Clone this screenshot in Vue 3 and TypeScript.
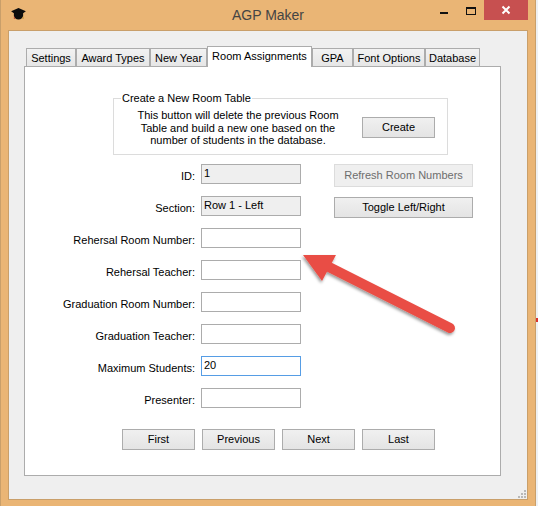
<script setup lang="ts">
interface Field {
  label: string
  value: string
  readonly?: boolean
  focused?: boolean
}

const tabs = ['Settings', 'Award Types', 'New Year', 'Room Assignments', 'GPA', 'Font Options', 'Database']
const tabWidths = [50, 74, 57, 105, 41, 72, 55]
const activeTab = 'Room Assignments'

const fields: Field[] = [
  { label: 'ID:', value: '1', readonly: true },
  { label: 'Section:', value: 'Row 1 - Left', readonly: true },
  { label: 'Rehersal Room Number:', value: '' },
  { label: 'Rehersal Teacher:', value: '' },
  { label: 'Graduation Room Number:', value: '' },
  { label: 'Graduation Teacher:', value: '' },
  { label: 'Maximum Students:', value: '20', focused: true },
  { label: 'Presenter:', value: '' },
]

const navButtons = ['First', 'Previous', 'Next', 'Last']
</script>

<template>
  <div class="page">
    <div class="window">
      <header class="titlebar">
        <svg class="app-icon" viewBox="0 0 16 13" width="15" height="12">
          <path d="M8 0 16 3.6 13 5.6V9C12 11 11 12.5 8 12.5S4 11 3 9V5.6L0 3.6z" fill="#0c0c0c" />
          <path d="M3 9.4h1v2.4H3z" fill="#b3402c" />
          <path d="M12.4 9.6h1v2.2h-1z" fill="#b98a2c" />
        </svg>
        <span class="title">AGP Maker</span>
        <div class="controls">
          <span class="ctl-min"></span>
          <span class="ctl-max"></span>
          <span class="ctl-close">
            <svg viewBox="0 0 10 10" width="10" height="10">
              <path d="M1.5 1.5 8.5 8.5M8.5 1.5 1.5 8.5" stroke="#fff" stroke-width="2" />
            </svg>
          </span>
        </div>
      </header>

      <div class="client">
        <div class="tabstrip">
          <div
            v-for="(tab, i) in tabs"
            :key="tab"
            class="tab"
            :class="{ active: tab === activeTab }"
            :style="{ width: tabWidths[i] + 'px' }"
          >{{ tab }}</div>
        </div>

        <section class="panel">
          <fieldset class="group">
            <legend>Create a New Room Table</legend>
            <p class="group-text">
              This button will delete the previous Room<br />
              Table and build a new one based on the<br />
              number of students in the database.
            </p>
            <button class="btn create">Create</button>
          </fieldset>

          <div class="form-row">
            <div class="fields">
              <template v-for="f in fields" :key="f.label">
                <label class="field-label">{{ f.label }}</label>
                <input
                  class="field-input"
                  :class="{ ro: f.readonly, focused: f.focused }"
                  :value="f.value"
                  :readonly="f.readonly"
                />
              </template>
            </div>
            <div class="actions">
              <button class="btn refresh" disabled>Refresh Room Numbers</button>
              <button class="btn toggle">Toggle Left/Right</button>
            </div>
          </div>

          <div class="nav">
            <button v-for="b in navButtons" :key="b" class="btn nav-btn">{{ b }}</button>
          </div>
        </section>

        <div class="grip">
          <i v-for="n in 6" :key="n" :class="'g' + n"></i>
        </div>
      </div>
    </div>

    <!-- sliver of another red arrow behind the window -->
    <span class="edge-tick"></span>

    <svg class="arrow" viewBox="0 0 538 506" width="538" height="506">
      <defs>
        <filter id="arrow-shadow" x="-20%" y="-20%" width="140%" height="140%">
          <feDropShadow dx="-1" dy="2" stdDeviation="1.6" flood-color="#000" flood-opacity="0.4" />
        </filter>
      </defs>
      <g filter="url(#arrow-shadow)">
        <path d="M303 255 336 255 322 281z" fill="#e94e45" />
        <path d="M327 266 450 328" stroke="#e94e45" stroke-width="10" stroke-linecap="round" />
      </g>
    </svg>
  </div>
</template>

<style scoped>
.page {
  position: relative;
  width: 538px;
  height: 506px;
  overflow: hidden;
  background: #eef0f2;
  font-family: "Liberation Sans", Arial, sans-serif;
  font-size: 11px;
  color: #000;
}

.window {
  box-sizing: border-box;
  width: 536px;
  height: 506px;
  display: flex;
  flex-direction: column;
  background: #eab575;
  border-left: 1px solid #c99f6a;
  border-right: 1px solid #c99f6a;
}

.titlebar {
  position: relative;
  height: 30px;
  flex: none;
}

.app-icon {
  position: absolute;
  left: 10px;
  top: 8px;
}

.title {
  display: block;
  text-align: center;
  font-size: 14px;
  line-height: 30px;
  color: #444;
}

.controls {
  position: absolute;
  top: 0;
  right: 7px;
  display: flex;
  align-items: flex-start;
}

.ctl-min {
  width: 8px;
  height: 2px;
  margin: 12px 18px 0 0;
  background: #111;
}

.ctl-max {
  box-sizing: border-box;
  width: 10px;
  height: 8px;
  margin: 7px 8px 0 0;
  border: 1px solid #111;
  border-top-width: 2px;
}

.ctl-close {
  width: 44px;
  height: 20px;
  display: flex;
  align-items: center;
  justify-content: center;
  background: #c75050;
}

.client {
  position: relative;
  box-sizing: border-box;
  flex: 1;
  margin: 0 7px 6px 7px;
  padding: 15px 0 0 15px;
  background: #efefef;
  border: 1px solid #c99f6a;
}

.tabstrip {
  display: flex;
  align-items: flex-end;
  height: 20px;
  padding-left: 2px;
}

.tab {
  box-sizing: border-box;
  height: 18px;
  line-height: 18px;
  text-align: center;
  background: linear-gradient(#f2f2f2, #e6e6e6);
  border: 1px solid #acacac;
  border-bottom: none;
}

.tab.active {
  position: relative;
  z-index: 1;
  height: 21px;
  margin-bottom: -1px;
  line-height: 18px;
  background: #fff;
}

.panel {
  box-sizing: border-box;
  width: 477px;
  height: 410px;
  padding: 25px 0 0;
  background: #fff;
  border: 1px solid #acacac;
}

.group {
  box-sizing: border-box;
  display: flex;
  align-items: center;
  width: 335px;
  height: 63px;
  min-width: 0;
  margin: 0 0 0 88px;
  padding: 0;
  border: 1px solid #dcdcdc;
}

.group legend {
  margin-left: 7px;
  padding: 0 1px;
  line-height: 13px;
}

.group-text {
  width: 248px;
  margin: -3px 0 0 0;
  text-align: center;
  line-height: 12.5px;
  flex: none;
}

.btn {
  box-sizing: border-box;
  padding: 0 0 2px;
  font: inherit;
  color: #000;
  background: linear-gradient(#f0f0f0, #e4e4e4);
  border: 1px solid #acacac;
}

.create {
  width: 73px;
  height: 21px;
  margin: -4px 0 0 0;
}

.form-row {
  display: flex;
  margin-top: 9px;
}

.fields {
  display: grid;
  grid-template-columns: 170px 100px;
  grid-auto-rows: 20px;
  column-gap: 6px;
  row-gap: 12px;
}

.field-label {
  text-align: right;
  line-height: 24px;
}

.field-input {
  box-sizing: border-box;
  width: 100px;
  height: 20px;
  padding: 0 2px 3px;
  font: inherit;
  color: #000;
  background: #fff;
  border: 1px solid #acacac;
  outline: none;
}

.field-input.ro {
  background: #efefef;
}

.field-input.focused {
  border-color: #569de5;
}

.actions {
  display: flex;
  flex-direction: column;
  gap: 10px;
  margin-left: 33px;
}

.refresh {
  width: 139px;
  height: 23px;
  color: #6d6d6d;
  background: #efefef;
  border-color: #dcdcdc;
}

.toggle {
  width: 139px;
  height: 21px;
}

.nav {
  display: flex;
  gap: 7px;
  margin: 21px 0 0 97px;
}

.nav-btn {
  width: 73px;
  height: 21px;
}

.grip {
  position: absolute;
  right: 1px;
  bottom: 1px;
  width: 11px;
  height: 11px;
}

.grip i {
  position: absolute;
  width: 2px;
  height: 2px;
  background: #b8b8b8;
}

.g1 { right: 0; bottom: 0; }
.g2 { right: 3px; bottom: 0; }
.g3 { right: 6px; bottom: 0; }
.g4 { right: 0; bottom: 3px; }
.g5 { right: 3px; bottom: 3px; }
.g6 { right: 0; bottom: 6px; }

.edge-tick {
  position: absolute;
  right: 0;
  top: 318px;
  width: 2px;
  height: 4px;
  background: #d9322e;
}

.arrow {
  position: absolute;
  left: 0;
  top: 0;
  pointer-events: none;
}
</style>
